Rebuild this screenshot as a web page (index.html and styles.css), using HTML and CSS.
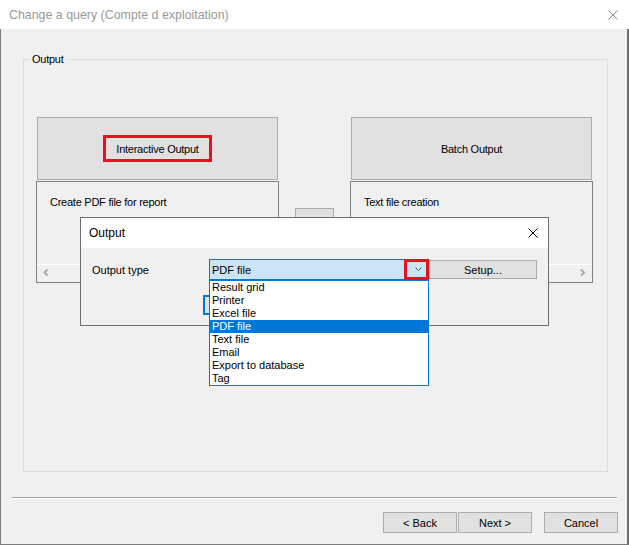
FILE: index.html
```html
<!DOCTYPE html>
<html>
<head>
<meta charset="utf-8">
<title>Change a query</title>
<link rel="stylesheet" href="styles.css">
</head>
<body>
<div class="window">
  <div class="titlebar">
    <span class="title">Change a query (Compte d exploitation)</span>
    <svg class="close" width="10" height="10" viewBox="0 0 10 10"><path d="M0.5 0.5L9.5 9.5M9.5 0.5L0.5 9.5"/></svg>
  </div>
  <div class="client">
    <div class="group">
      <span class="legend">Output</span>
      <div class="cols">
        <div class="col">
          <div class="modebox"><span class="highlight">Interactive Output</span></div>
          <div class="pane">
            <div class="pane-text">Create PDF file for report</div>
            <div class="hscroll">
              <svg class="sarrow" width="17" height="17" viewBox="0 0 17 17"><path d="M10.5 4.5L7.5 7.5L10.5 10.5"/></svg>
              <span></span>
            </div>
          </div>
        </div>
        <div class="mid"><div class="movebtn"></div></div>
        <div class="col">
          <div class="modebox"><span>Batch Output</span></div>
          <div class="pane">
            <div class="pane-text">Text file creation</div>
            <div class="hscroll">
              <span></span>
              <svg class="sarrow" width="17" height="17" viewBox="0 0 17 17"><path d="M6 4.5L9 7.5L6 10.5"/></svg>
            </div>
          </div>
        </div>
      </div>
    </div>
    <div class="separator"></div>
    <div class="footer">
      <button class="btn">&lt; Back</button>
      <button class="btn next">Next &gt;</button>
      <button class="btn">Cancel</button>
    </div>

    <div class="dialog">
      <div class="dlg-title">
        <span>Output</span>
        <svg class="dlg-close" width="10" height="10" viewBox="0 0 10 10"><path d="M0.5 0.5L9.5 9.5M9.5 0.5L0.5 9.5"/></svg>
      </div>
      <div class="dlg-body">
        <div class="row">
          <span class="lbl">Output type</span>
          <div class="combo">
            <span class="combo-text">PDF file</span>
            <svg class="chev" width="7" height="4" viewBox="0 0 7 4"><path d="M0.5 0.5L3.5 3.5L6.5 0.5"/></svg>
            <span class="redbox"></span>
            <ul class="list">
              <li>Result grid</li>
              <li>Printer</li>
              <li>Excel file</li>
              <li class="sel">PDF file</li>
              <li>Text file</li>
              <li>Email</li>
              <li>Export to database</li>
              <li>Tag</li>
            </ul>
          </div>
          <button class="btn setup">Setup...</button>
        </div>
        <div class="row2">
          <button class="btn ok" aria-label="OK"></button>
          <button class="btn cancel2" aria-label="Cancel"></button>
        </div>
      </div>
    </div>
  </div>
</div>
</body>
</html>
```
FILE: styles.css
```css
* { box-sizing: border-box; }
html, body { margin: 0; padding: 0; }
body {
  width: 629px;
  height: 545px;
  overflow: hidden;
  font-family: "Liberation Sans", Arial, sans-serif;
  font-size: 11px;
  color: #000;
  background: #6b6b6b;
}
.window {
  width: 629px;
  height: 545px;
  display: flex;
  flex-direction: column;
}
.titlebar {
  height: 29px;
  flex: none;
  background: #fff;
  display: flex;
  align-items: center;
  justify-content: space-between;
  padding: 0 11px 0 9px;
}
.title {
  font-size: 12.4px;
  color: #999;
}
.close path { stroke: #8c8c8c; stroke-width: 1; fill: none; }

.client {
  flex: 1;
  position: relative;
  background: #f0f0f0;
  border-left: 1px solid #7a7a7a;
  border-right: 2px solid #707070;
  border-bottom: 1px solid #7a7a7a;
  padding-top: 30px;
}
.group {
  position: relative;
  margin-left: 22px;
  width: 585px;
  height: 413px;
  border: 1px solid #dcdcdc;
}
.legend {
  position: absolute;
  top: -7px;
  left: 6px;
  padding: 0 2px;
  line-height: 13px;
  background: #f0f0f0;
  letter-spacing: -0.25px;
}
.cols {
  display: grid;
  grid-template-columns: 243px 71px 243px;
  margin: 57px 0 0 12px;
}
.col { display: flex; flex-direction: column; }
.modebox {
  margin-left: 1px;
  width: 241px;
  height: 63px;
  background: #e1e1e1;
  border: 1px solid #adadad;
  display: flex;
  align-items: center;
  justify-content: center;
  letter-spacing: -0.25px;
}
.highlight {
  width: 109px;
  height: 27px;
  border: 3px solid #e8101e;
  display: flex;
  align-items: center;
  justify-content: center;
}
.pane {
  margin-top: 1px;
  width: 243px;
  height: 102px;
  border: 1px solid #828282;
  display: flex;
  flex-direction: column;
  justify-content: space-between;
}
.pane-text {
  padding: 14px 0 0 13px;
  line-height: 13px;
  letter-spacing: -0.25px;
}
.hscroll {
  height: 18px;
  border-top: 1px solid #fff;
  display: flex;
  justify-content: space-between;
}
.sarrow path { stroke: #a6a6a6; stroke-width: 1.8; fill: none; }
.mid { padding: 91px 0 0 16px; }
.movebtn {
  width: 39px;
  height: 23px;
  background: #e1e1e1;
  border: 1px solid #adadad;
}

.separator {
  margin: 25px 0 0 11px;
  width: 605px;
  height: 2px;
  border-top: 1px solid #a0a0a0;
  border-bottom: 1px solid #fff;
}
.footer {
  margin-top: 13px;
  display: flex;
  justify-content: flex-end;
  padding-right: 9px;
  gap: 1px;
}
.btn {
  width: 74px;
  height: 21px;
  padding: 0;
  margin: 0;
  background: #e1e1e1;
  border: 1px solid #adadad;
  font-family: "Liberation Sans", Arial, sans-serif;
  font-size: 11px;
  color: #000;
}
.next { margin-right: 11px; }

.dialog {
  position: absolute;
  left: 79px;
  top: 188px;
  width: 469px;
  height: 109px;
  background: #f0f0f0;
  border: 1px solid #707070;
}
.dlg-title {
  height: 30px;
  background: #fff;
  display: flex;
  align-items: center;
  justify-content: space-between;
  padding: 0 10px 0 8px;
  font-size: 12px;
}
.dlg-close path { stroke: #000; stroke-width: 1; fill: none; }
.dlg-body { padding: 11px 0 0 11px; }
.row { display: flex; align-items: center; height: 21px; }
.lbl { width: 117px; }
.combo {
  position: relative;
  width: 219px;
  height: 21px;
  background: #cce4f7;
  border: 1px solid #0078d7;
  display: flex;
  align-items: center;
  padding-left: 2px;
}
.chev {
  position: absolute;
  left: 205px;
  top: 7px;
}
.chev path { stroke: #555; stroke-width: 1; fill: none; }
.redbox {
  position: absolute;
  right: -2px;
  top: -1px;
  width: 25px;
  height: 21px;
  border: 3px solid #e8101e;
}
.list {
  position: absolute;
  left: -1px;
  top: 20px;
  width: 220px;
  margin: 0;
  padding: 0;
  list-style: none;
  background: #fff;
  border: 1px solid #0078d7;
  z-index: 5;
}
.list li {
  height: 13px;
  line-height: 13px;
  padding-left: 2px;
}
.list li.sel { background: #0078d7; color: #fff; }
.setup { margin-left: 1px; width: 108px; height: 19px; }
.row2 {
  margin-top: 15px;
  padding-left: 111px;
  display: flex;
  gap: 6px;
}
.ok { width: 75px; height: 20px; border: 2px solid #0078d7; }
.cancel2 { width: 75px; height: 20px; }
```
